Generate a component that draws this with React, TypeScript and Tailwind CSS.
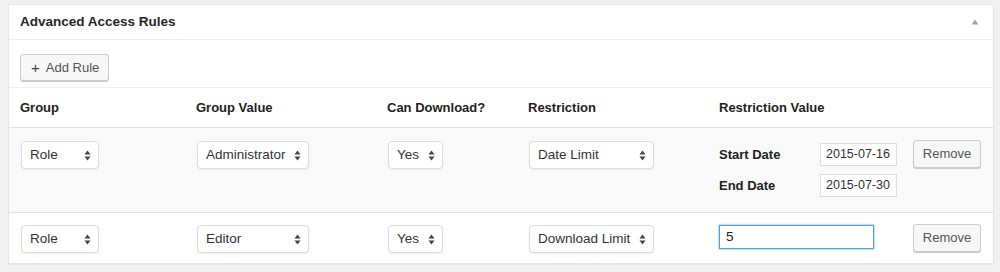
import React from "react";

const font = { fontFamily: '"Liberation Sans", Arial, Helvetica, sans-serif' };

function Arrows() {
  return (
    <svg width="7" height="11" viewBox="0 0 7 11" className="shrink-0">
      <path d="M3.5 0.5 L6.5 4.5 L0.5 4.5 Z" fill="#444" />
      <path d="M3.5 10.5 L6.5 6.5 L0.5 6.5 Z" fill="#444" />
    </svg>
  );
}

function Select({ label, className }: { label: string; className: string }) {
  return (
    <div
      className={
        "flex items-center justify-between h-[28px] ml-[1px] border border-[#dddddd] rounded-[4px] bg-white pl-[8px] pr-[7px] text-[13.5px] text-[#333] shadow-[0_1px_2px_rgba(0,0,0,0.06)] " +
        className
      }
    >
      <span>{label}</span>
      <Arrows />
    </div>
  );
}

function RemoveBtn() {
  return (
    <div className="flex items-center justify-center w-[68px] h-[28px] border border-[#cccccc] rounded-[3px] bg-[#f7f7f7] text-[13px] text-[#555] shadow-[0_1px_0_#cccccc]">
      Remove
    </div>
  );
}

export default function App() {
  return (
    <div className="w-[1000px] h-[272px] bg-[#f1f1f1] pt-[4px] pl-[8px]" style={font}>
      <div className="w-[986px] border border-[#e5e5e5] bg-white shadow-[0_1px_1px_rgba(0,0,0,0.04)]">
        {/* header */}
        <div className="h-[35px] border-b border-[#eeeeee] flex items-center justify-between pl-[11px] pr-[6px]">
          <span className="text-[13.5px] font-bold text-[#23282d]">Advanced Access Rules</span>
          <div className="w-[24px] h-[24px] flex items-center justify-center">
            <svg width="8" height="6" viewBox="0 0 8 6">
              <path d="M4 0.5 L7.5 5.5 L0.5 5.5 Z" fill="#a0a5aa" />
            </svg>
          </div>
        </div>
        {/* add rule */}
        <div className="h-[48px] border-b border-[#eeeeee] pl-[11px] pt-[14px]">
          <div className="inline-flex items-center w-[89px] h-[27px] border border-[#cccccc] rounded-[3px] bg-[#f7f7f7] text-[13px] text-[#555] shadow-[0_1px_0_#cccccc] pl-[10px]">
            <span className="text-[15px] leading-none mr-[6px] text-[#444]">+</span>
            <span>Add Rule</span>
          </div>
        </div>
        {/* table head */}
        <div className="h-[40px] border-b border-[#e1e1e1] grid grid-cols-[176px_191px_141px_191px_194px_1fr] items-center pl-[11px] text-[13px] font-bold text-[#222]">
          <div>Group</div>
          <div>Group Value</div>
          <div>Can Download?</div>
          <div>Restriction</div>
          <div>Restriction Value</div>
          <div></div>
        </div>
        {/* row 1 */}
        <div className="h-[85px] border-b border-[#e1e1e1] bg-[#f9f9f9] grid grid-cols-[176px_191px_141px_191px_194px_1fr] items-start pl-[11px] pt-[13px]">
          <Select label="Role" className="w-[78px]" />
          <Select label="Administrator" className="w-[112px]" />
          <Select label="Yes" className="w-[55px]" />
          <Select label="Date Limit" className="w-[125px]" />
          <div className="flex flex-col gap-[8px] mt-[2px]">
            <div className="flex items-center">
              <span className="w-[101px] text-[13px] font-bold text-[#222]">Start Date</span>
              <div className="w-[77px] h-[23px] border border-[#dddddd] bg-white text-[12.5px] text-[#333] flex items-center pl-[5px]">
                2015-07-16
              </div>
            </div>
            <div className="flex items-center">
              <span className="w-[101px] text-[13px] font-bold text-[#222]">End Date</span>
              <div className="w-[77px] h-[23px] border border-[#dddddd] bg-white text-[12.5px] text-[#333] flex items-center pl-[5px]">
                2015-07-30
              </div>
            </div>
          </div>
          <div className="-mt-[1px]">
            <RemoveBtn />
          </div>
        </div>
        {/* row 2 */}
        <div className="h-[50px] grid grid-cols-[176px_191px_141px_191px_194px_1fr] items-start pl-[11px] pt-[12px]">
          <Select label="Role" className="w-[78px]" />
          <Select label="Editor" className="w-[112px]" />
          <Select label="Yes" className="w-[55px]" />
          <Select label="Download Limit" className="w-[125px]" />
          <div className="w-[155px] h-[24px] border border-[#5b9dd9] bg-white shadow-[0_0_2px_rgba(30,140,190,0.8)] text-[13.5px] text-[#222] flex items-center pl-[6px]">
            5
          </div>
          <div className="-mt-[1px]">
            <RemoveBtn />
          </div>
        </div>
      </div>
    </div>
  );
}
